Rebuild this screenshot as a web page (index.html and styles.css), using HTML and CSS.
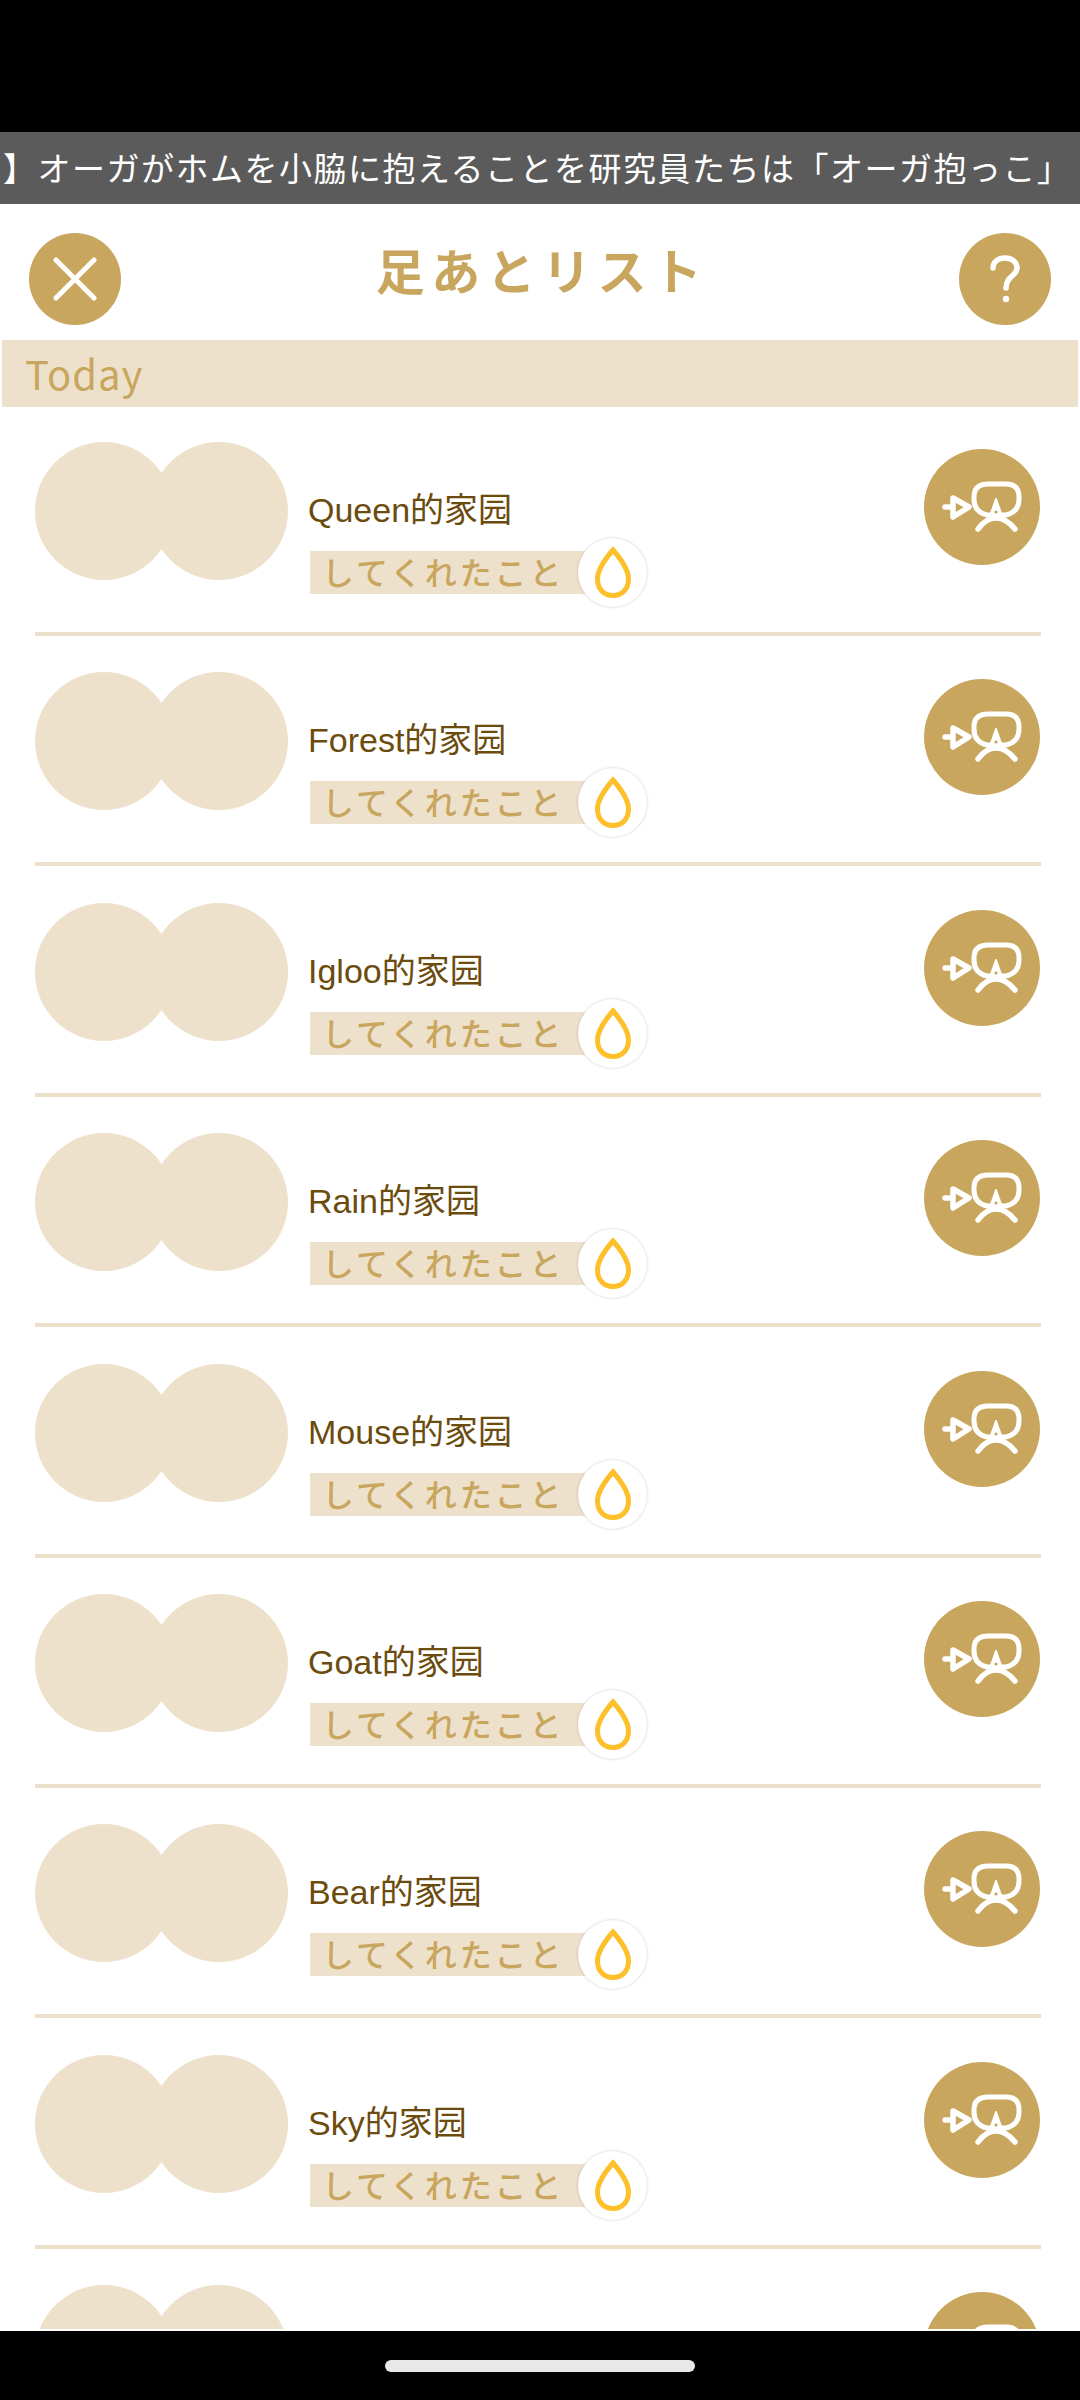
FILE: index.html
```html
<!DOCTYPE html>
<html lang="ja">
<head>
    <meta charset="UTF-8">
    <meta name="viewport" content="width=device-width, initial-scale=1.0">
    <title>足あとリスト</title>
    <link rel="stylesheet" href="styles.css">
</head>
<body>
    <svg class="icon-defs" width="0" height="0">
        <symbol id="icon-follow" viewBox="0 0 116 116">
            <path d="M21 58H28M29 49L45 58L29 68Z" fill="none" stroke="#fff" stroke-width="5.5" stroke-linecap="round" stroke-linejoin="round"/>
            <path d="M64 35H82Q95 35 95 48V50Q95 63 82 66H63Q50 63 50 50V48Q50 35 64 35Z" fill="none" stroke="#fff" stroke-width="5"/>
            <path d="M54 80Q62 69 72 69Q82 69 91 80" fill="none" stroke="#fff" stroke-width="5.5" stroke-linecap="round"/>
            <path d="M72 50L65 70H79Z" fill="#fff" stroke="#fff" stroke-width="2" stroke-linejoin="round"/>
            <circle cx="72" cy="63" r="1.6" fill="#c8a65e"/>
        </symbol>
        <symbol id="icon-drop" viewBox="0 0 70 70">
            <path d="M35 12C28 20 19.5 31 19.5 41C19.5 51 26 57.5 35 57.5C44 57.5 50.5 51 50.5 41C50.5 31 42 20 35 12Z" fill="none" stroke="#fdbf2a" stroke-width="5"/>
        </symbol>
    </svg>

    <div class="status-bar"></div>

    <div class="ticker"><span class="ticker-text">】オーガがホムを小脇に抱えることを研究員たちは「オーガ抱っこ」</span></div>

    <div class="screen">
        <div class="screen-inner">
            <div class="header">
                <button class="round-button">
                    <svg width="44" height="44" viewBox="0 0 44 44"><path d="M3 3L41 41M41 3L3 41" stroke="#fff" stroke-width="5" stroke-linecap="round"/></svg>
                </button>
                <h1 class="title">足あとリスト</h1>
                <button class="round-button">
                    <svg width="32" height="50" viewBox="0 0 32 50"><path d="M4 14C4 7 10 4 16 4C23 4 28 8 28 14C28 22 17 22 17 34" fill="none" stroke="#fff" stroke-width="5.5" stroke-linecap="round"/><circle cx="17" cy="45" r="3.2" fill="#fff"/></svg>
                </button>
            </div>

            <div class="date-band">Today</div>

            <div class="visit-list">
                <div class="visit-row">
                    <div class="avatars"><div class="avatar"></div><div class="avatar"></div></div>
                    <div class="visit-info">
                        <div class="visit-name">Queen的家园</div>
                        <div class="visit-tag">してくれたこと<span class="drop-badge"><svg width="70" height="70"><use href="#icon-drop"/></svg></span></div>
                    </div>
                    <button class="follow-button"><svg width="116" height="116"><use href="#icon-follow"/></svg></button>
                </div>
                <div class="visit-row">
                    <div class="avatars"><div class="avatar"></div><div class="avatar"></div></div>
                    <div class="visit-info">
                        <div class="visit-name">Forest的家园</div>
                        <div class="visit-tag">してくれたこと<span class="drop-badge"><svg width="70" height="70"><use href="#icon-drop"/></svg></span></div>
                    </div>
                    <button class="follow-button"><svg width="116" height="116"><use href="#icon-follow"/></svg></button>
                </div>
                <div class="visit-row">
                    <div class="avatars"><div class="avatar"></div><div class="avatar"></div></div>
                    <div class="visit-info">
                        <div class="visit-name">Igloo的家园</div>
                        <div class="visit-tag">してくれたこと<span class="drop-badge"><svg width="70" height="70"><use href="#icon-drop"/></svg></span></div>
                    </div>
                    <button class="follow-button"><svg width="116" height="116"><use href="#icon-follow"/></svg></button>
                </div>
                <div class="visit-row">
                    <div class="avatars"><div class="avatar"></div><div class="avatar"></div></div>
                    <div class="visit-info">
                        <div class="visit-name">Rain的家园</div>
                        <div class="visit-tag">してくれたこと<span class="drop-badge"><svg width="70" height="70"><use href="#icon-drop"/></svg></span></div>
                    </div>
                    <button class="follow-button"><svg width="116" height="116"><use href="#icon-follow"/></svg></button>
                </div>
                <div class="visit-row">
                    <div class="avatars"><div class="avatar"></div><div class="avatar"></div></div>
                    <div class="visit-info">
                        <div class="visit-name">Mouse的家园</div>
                        <div class="visit-tag">してくれたこと<span class="drop-badge"><svg width="70" height="70"><use href="#icon-drop"/></svg></span></div>
                    </div>
                    <button class="follow-button"><svg width="116" height="116"><use href="#icon-follow"/></svg></button>
                </div>
                <div class="visit-row">
                    <div class="avatars"><div class="avatar"></div><div class="avatar"></div></div>
                    <div class="visit-info">
                        <div class="visit-name">Goat的家园</div>
                        <div class="visit-tag">してくれたこと<span class="drop-badge"><svg width="70" height="70"><use href="#icon-drop"/></svg></span></div>
                    </div>
                    <button class="follow-button"><svg width="116" height="116"><use href="#icon-follow"/></svg></button>
                </div>
                <div class="visit-row">
                    <div class="avatars"><div class="avatar"></div><div class="avatar"></div></div>
                    <div class="visit-info">
                        <div class="visit-name">Bear的家园</div>
                        <div class="visit-tag">してくれたこと<span class="drop-badge"><svg width="70" height="70"><use href="#icon-drop"/></svg></span></div>
                    </div>
                    <button class="follow-button"><svg width="116" height="116"><use href="#icon-follow"/></svg></button>
                </div>
                <div class="visit-row">
                    <div class="avatars"><div class="avatar"></div><div class="avatar"></div></div>
                    <div class="visit-info">
                        <div class="visit-name">Sky的家园</div>
                        <div class="visit-tag">してくれたこと<span class="drop-badge"><svg width="70" height="70"><use href="#icon-drop"/></svg></span></div>
                    </div>
                    <button class="follow-button"><svg width="116" height="116"><use href="#icon-follow"/></svg></button>
                </div>
                <div class="visit-row">
                    <div class="avatars"><div class="avatar"></div><div class="avatar"></div></div>
                    <div class="visit-info"></div>
                    <button class="follow-button"><svg width="116" height="116"><use href="#icon-follow"/></svg></button>
                </div>
            </div>
        </div>
    </div>

    <div class="nav-bar"><div class="home-indicator"></div></div>
</body>
</html>
```

FILE: styles.css
```css
body {
    margin: 0;
    width: 1080px;
    height: 2400px;
    display: flex;
    flex-direction: column;
    overflow: hidden;
    background: #fff;
    font-family: "Noto Sans CJK JP", "Noto Sans", sans-serif;
}

.icon-defs {
    position: absolute;
}

.status-bar {
    height: 132px;
    flex: none;
    background: #000;
}

.ticker {
    height: 72px;
    flex: none;
    background: #5b5b5b;
    color: #fff;
    font-size: 33px;
    letter-spacing: 1.5px;
    line-height: 70px;
    white-space: nowrap;
    overflow: hidden;
}

.ticker-text {
    display: block;
    margin-left: 3px;
}

.screen {
    flex: 1;
    min-height: 0;
    padding-bottom: 2px;
    display: flex;
}

.screen-inner {
    flex: 1;
    overflow: hidden;
}

.header {
    display: flex;
    align-items: center;
    justify-content: space-between;
    padding: 29px 29px 15px;
}

.round-button {
    width: 92px;
    height: 92px;
    padding: 0;
    border: none;
    border-radius: 50%;
    background: #c8a65e;
    display: flex;
    align-items: center;
    justify-content: center;
}

.title {
    margin: 0 0 20px 4px;
    color: #c8a65e;
    font-size: 49px;
    font-weight: 700;
    letter-spacing: 6.4px;
    line-height: 64px;
}

.date-band {
    height: 67px;
    margin: 0 2px;
    padding-left: 23px;
    background: #eee1cc;
    color: #c8a65e;
    font-size: 40px;
    letter-spacing: 1px;
    line-height: 67px;
    box-sizing: border-box;
}

.visit-list {
    padding: 35px 39px 0 35px;
}

.visit-row {
    height: 194px;
    margin-bottom: 36.4px;
    border-bottom: 4px solid #eee1cc;
    box-sizing: border-box;
    display: flex;
    align-items: flex-start;
}

.avatars {
    display: flex;
    flex: none;
}

.avatar {
    width: 138px;
    height: 138px;
    border-radius: 50%;
    background: #eee1cc;
}

.avatar + .avatar {
    margin-left: -23px;
}

.visit-info {
    margin-left: 20px;
    padding-top: 45px;
}

.visit-name {
    color: #6b4c0e;
    font-family: "Liberation Sans", "Noto Sans CJK SC", sans-serif;
    font-size: 34px;
    line-height: 46px;
}

.visit-tag {
    position: relative;
    width: 268px;
    height: 43px;
    margin: 18px 0 0 2px;
    padding-left: 12px;
    background: #eee1cc;
    color: #c8a65e;
    font-size: 32px;
    font-weight: 500;
    letter-spacing: 2.9px;
    line-height: 41px;
    white-space: nowrap;
}

.drop-badge {
    position: absolute;
    left: 268px;
    top: -13px;
    width: 69px;
    height: 69px;
    border-radius: 50%;
    background: #fff;
    box-shadow: 0 0 3px rgba(0, 0, 0, 0.2);
}

.follow-button {
    width: 116px;
    height: 116px;
    margin: 7px 1px 0 auto;
    padding: 0;
    border: none;
    border-radius: 50%;
    background: #c8a65e;
    flex: none;
}

.nav-bar {
    height: 69px;
    flex: none;
    background: #000;
    display: flex;
    justify-content: center;
    padding-top: 29px;
    box-sizing: border-box;
}

.home-indicator {
    width: 310px;
    height: 12px;
    border-radius: 6px;
    background: #e8e8e8;
}
```
